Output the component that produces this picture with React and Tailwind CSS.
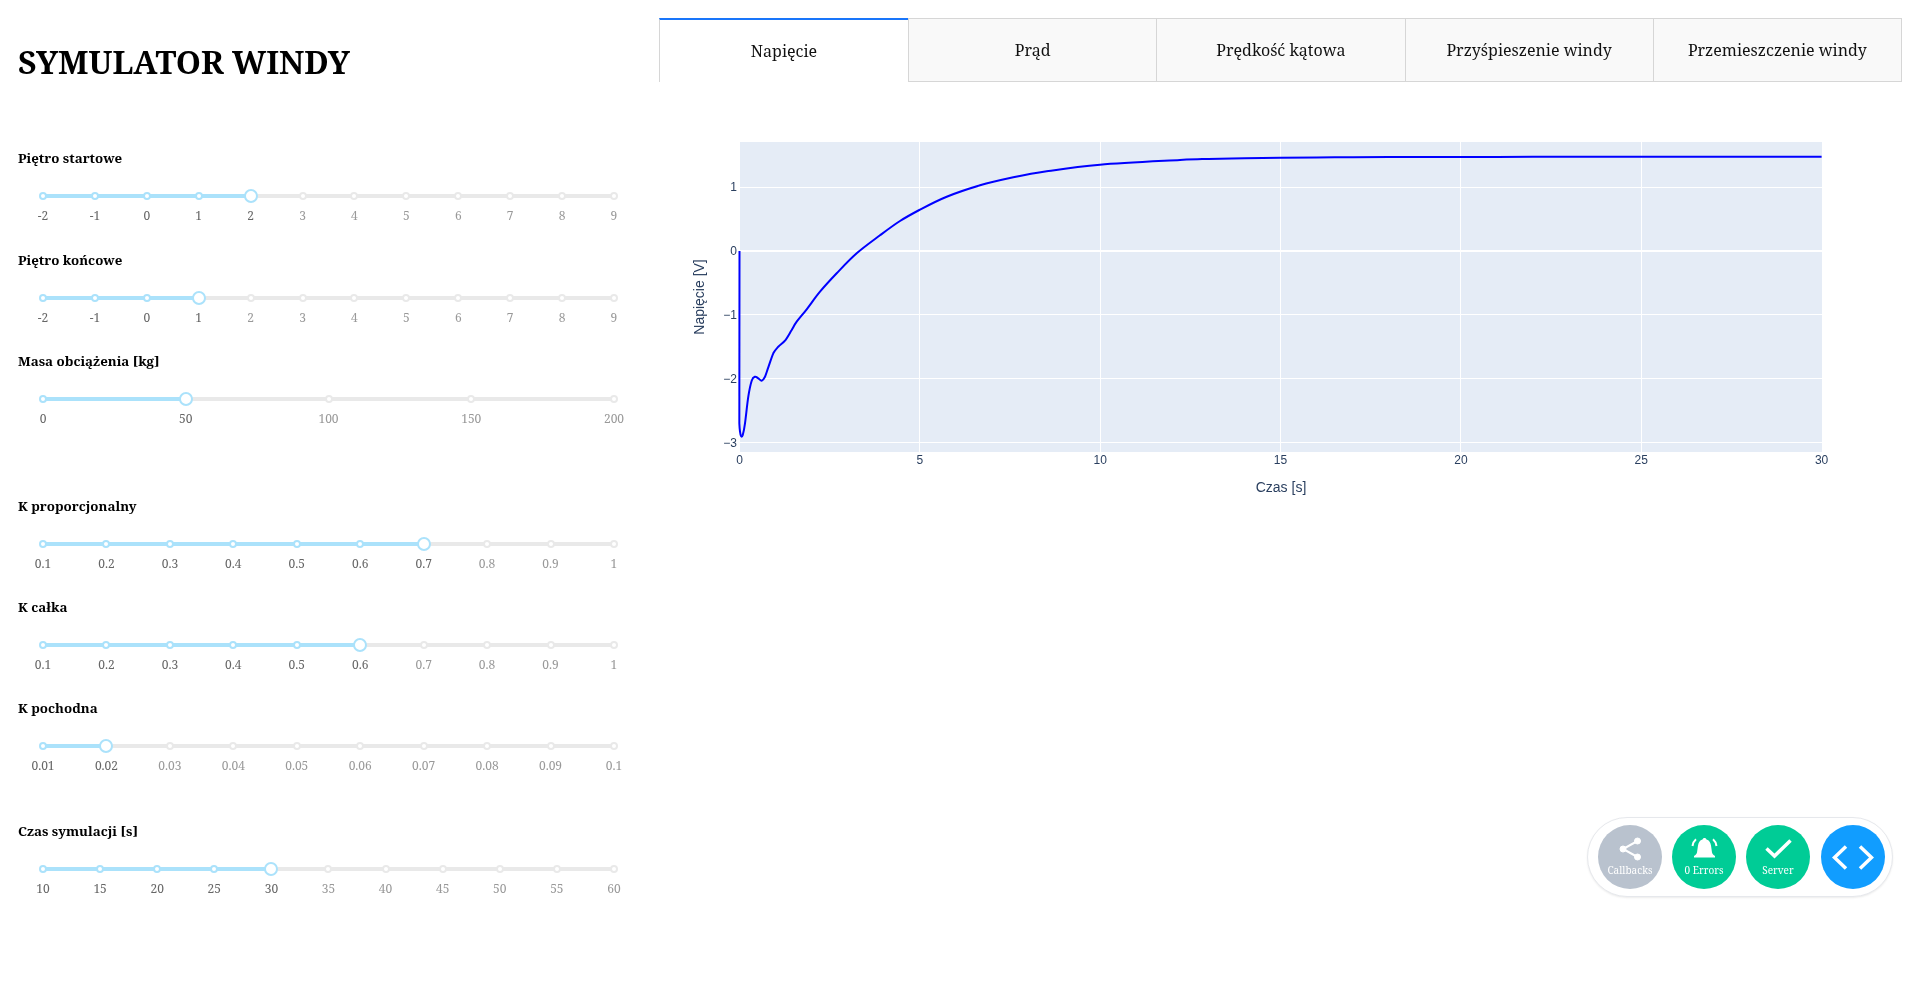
import React from 'react';

const serif = 'font-["Noto_Serif","DejaVu_Serif_Condensed","DejaVu_Serif",serif]';

const floors = [-2, -1, 0, 1, 2, 3, 4, 5, 6, 7, 8, 9];
const gains = [0.1, 0.2, 0.3, 0.4, 0.5, 0.6, 0.7, 0.8, 0.9, 1];
const derivs = [0.01, 0.02, 0.03, 0.04, 0.05, 0.06, 0.07, 0.08, 0.09, 0.1];
const times = [10, 15, 20, 25, 30, 35, 40, 45, 50, 55, 60];
const tabs = ['Prąd', 'Prędkość kątowa', 'Przyśpieszenie windy', 'Przemieszczenie windy'];

function Slider({ label, marks, value, tight }) {
  const idx = marks.indexOf(value);
  return (
    <div className={tight ? 'h-[101px]' : 'h-[101.5px]'}>
      <div className="h-5 text-[13.33px] leading-5 font-bold text-black">{label}</div>
      <div className="relative mx-[25px] mt-[27px] h-[2px]">
        <div className="absolute left-0 right-0 top-[-1px] h-1 rounded-full bg-[#e9e9e9]" />
        <div
          className="absolute left-0 top-[-1px] h-1 bg-[#abe2fb]"
          style={{ width: `${(idx / (marks.length - 1)) * 100}%` }}
        />
        <div className="relative flex justify-between">
          {marks.map((m, i) => (
            <div key={m} className="flex w-0 flex-col items-center">
              {i === idx ? (
                <div className="z-10 mt-[-6px] h-[14px] w-[14px] shrink-0 rounded-full border-2 border-[#abe2fb] bg-white" />
              ) : (
                <div
                  className={`mt-[-3px] mb-[3px] h-2 w-2 shrink-0 rounded-full border-2 bg-white ${
                    i < idx ? 'border-[#abe2fb]' : 'border-[#e9e9e9]'
                  }`}
                />
              )}
              <span className={`mt-[4px] text-[12px] leading-[18px] whitespace-nowrap ${i <= idx ? 'text-[#666]' : 'text-[#999]'}`}>
                {m}
              </span>
            </div>
          ))}
        </div>
      </div>
    </div>
  );
}

// wykres: piksele liczone względem svg (lewy górny róg 659,82)
const PX = (t) => 80.5 + t * 36.07;
const PY = (v) => 168.9 - v * 63.9;

const early = [
  [178, 880], [180, 905], [183, 918], [188, 916], [195, 880], [205, 800], [215, 752], [225, 740],
  [235, 745], [245, 752], [255, 740], [265, 712], [280, 670], [295, 650], [315, 632], [335, 600],
  [350, 575], [380, 538], [420, 485], [470, 430], [530, 370],
].map(([x, y]) => [680 + x / 3 - 659, 130 + y / 3 - 82]);

// odczytane z wykresu w przedziale ok. 4-12 s
const middle = [
  [0, 256], [60, 213], [118, 180], [200, 140], [300, 106], [400, 82], [500, 64], [660, 44], [900, 30],
].map(([x, y]) => [880 + x / 3 - 659, 150 + y / 3 - 82]);

const tail = [];
for (let t = 13; t <= 30; t += 1) {
  tail.push([PX(t), PY(1.473 - 6.07 * Math.exp(-t / 2.49))]);
}

function smooth(pts) {
  let d = '';
  for (let i = 0; i < pts.length - 1; i++) {
    const p0 = pts[Math.max(i - 1, 0)];
    const p1 = pts[i];
    const p2 = pts[i + 1];
    const p3 = pts[Math.min(i + 2, pts.length - 1)];
    const c1 = [p1[0] + (p2[0] - p0[0]) / 6, p1[1] + (p2[1] - p0[1]) / 6];
    const c2 = [p2[0] - (p3[0] - p1[0]) / 6, p2[1] - (p3[1] - p1[1]) / 6];
    d += ` C${c1[0].toFixed(1)} ${c1[1].toFixed(1)} ${c2[0].toFixed(1)} ${c2[1].toFixed(1)} ${p2[0].toFixed(1)} ${p2[1].toFixed(1)}`;
  }
  return d;
}

const curve = `M${PX(0)} ${PY(0)} L${early[0][0]} ${early[0][1]}` + smooth([...early, ...middle, ...tail]);

function Chart() {
  return (
    <svg width="1243" height="450" className="block font-['Liberation_Sans',sans-serif]">
      <rect x="81" y="60" width="1082" height="310" fill="#e5ecf6" />
      <g shapeRendering="crispEdges">
        {[5, 10, 15, 20, 25].map((t) => (
          <line key={t} x1={PX(t)} x2={PX(t)} y1="60" y2="370" stroke="#fff" strokeWidth="1" />
        ))}
        {[1, -1, -2, -3].map((v) => (
          <line key={v} x1="81" x2="1163" y1={PY(v)} y2={PY(v)} stroke="#fff" strokeWidth="1" />
        ))}
        <line x1="81" x2="1163" y1={PY(0)} y2={PY(0)} stroke="#fff" strokeWidth="2" />
      </g>
      <path d={curve} fill="none" stroke="#0000ff" strokeWidth="2" />
      {[0, 5, 10, 15, 20, 25, 30].map((t) => (
        <text key={t} x={PX(t)} y="382" textAnchor="middle" fontSize="12" fill="#2a3f5f">{t}</text>
      ))}
      {[1, 0, -1, -2, -3].map((v) => (
        <text key={v} x="78" y={PY(v) + 4} textAnchor="end" fontSize="12" fill="#2a3f5f">
          {v < 0 ? `\u2212${-v}` : v}
        </text>
      ))}
      <text x="622" y="410" textAnchor="middle" fontSize="14" fill="#2a3f5f">Czas [s]</text>
      <text x="0" y="0" transform="translate(45 215) rotate(-90)" textAnchor="middle" fontSize="14" fill="#2a3f5f">Napięcie [V]</text>
    </svg>
  );
}

function DevButton({ color, label, children }) {
  return (
    <div className={`flex h-16 w-16 flex-col items-center rounded-full pt-[12px] text-white ${color}`}>
      <div className="flex h-[24px] items-center justify-center">{children}</div>
      <span className="mt-[3px] text-[10px] leading-[12px]">{label}</span>
    </div>
  );
}

function DevTools() {
  return (
    <div className="fixed right-[27px] bottom-[89px] flex h-[80px] w-[306px] items-center gap-[10px] rounded-full border border-[#e6e8ec] bg-white pl-[10px] shadow-[0_1px_2px_rgba(0,0,0,0.08)] will-change-transform">
      <DevButton color="bg-[#b9c2ce]" label="Callbacks">
        <svg width="23" height="24" viewBox="0 0 23 24" fill="#fff" stroke="#fff">
          <circle cx="18.500" cy="4" r="3" />
          <circle cx="4" cy="12" r="3" />
          <circle cx="18.500" cy="20" r="3" />
          <path d="M18.500 4L4 12L18.500 20" fill="none" strokeWidth="2" />
        </svg>
      </DevButton>
      <DevButton color="bg-[#00cc96]" label="0 Errors">
        <svg width="27" height="24" viewBox="0 0 27 24" fill="#fff">
          <path d="M13.500 1c1 0 1.800 .6 2 1.500c2.800 .8 4 3 4.500 6l1 7c.3 1.500 1.500 2.500 3 3.500v1.500h-21v-1.500c1.500-1 2.700-2 3-3.500l1-7c.5-3 1.700-5.200 4.500-6c.2-.9 1-1.500 2-1.500z" />
          <path d="M1.500 9C2 6 3.200 3.800 5 2.300M25.500 9C25 6 23.800 3.800 22 2.300" fill="none" stroke="#fff" strokeWidth="2" />
        </svg>
      </DevButton>
      <DevButton color="bg-[#00cc96]" label="Server">
        <svg width="27" height="20" viewBox="0 0 27 20" fill="none" stroke="#fff" strokeWidth="3.500">
          <path d="M1.500 9.500L9.500 17L25.500 1.500" />
        </svg>
      </DevButton>
      <div className="ml-px flex h-16 w-16 items-center justify-center rounded-full bg-[#119dff]">
        <svg width="42" height="25" viewBox="0 0 42 25" fill="none" stroke="#fff" strokeWidth="3.500">
          <path d="M14 1.500L2.500 12.500L14 23.500M28 1.500L39.500 12.500L28 23.500" />
        </svg>
      </div>
    </div>
  );
}

export default function App() {
  return (
    <div className={`flex h-[986px] w-full overflow-hidden bg-white px-[18px] ${serif}`}>
      <div className="w-[621px] shrink-0 will-change-transform">
        <h1 className="mt-[40px] h-[108px] text-[32px] leading-[44px] font-bold text-black">SYMULATOR WINDY</h1>
        <Slider label="Piętro startowe" marks={floors} value={2} />
        <Slider label="Piętro końcowe" marks={floors} value={1} />
        <Slider label="Masa obciążenia [kg]" marks={[0, 50, 100, 150, 200]} value={50} />
        <div className="h-[43.500px]" />
        <Slider tight label="K proporcjonalny" marks={gains} value={0.7} />
        <Slider tight label="K całka" marks={gains} value={0.6} />
        <Slider tight label="K pochodna" marks={derivs} value={0.02} />
        <div className="h-[22px]" />
        <Slider label="Czas symulacji [s]" marks={times} value={30} />
      </div>
      <div className="ml-[20px] mt-[18px] w-[1243px] shrink-0 will-change-transform">
        <div className="flex h-[64px]">
          <div className="flex w-[249px] items-center justify-center border-t-2 border-l border-t-[#1975fa] border-l-[#d6d6d6] bg-white text-[16px] text-[#111]">
            Napięcie
          </div>
          {tabs.map((tab, i) => (
            <div
              key={tab}
              className={`flex flex-1 items-center justify-center border border-[#d6d6d6] bg-[#f9f9f9] text-[16px] text-[#111] ${i > 0 ? 'border-l-0' : ''}`}
            >
              {tab}
            </div>
          ))}
        </div>
        <Chart />
      </div>
      <DevTools />
    </div>
  );
}
